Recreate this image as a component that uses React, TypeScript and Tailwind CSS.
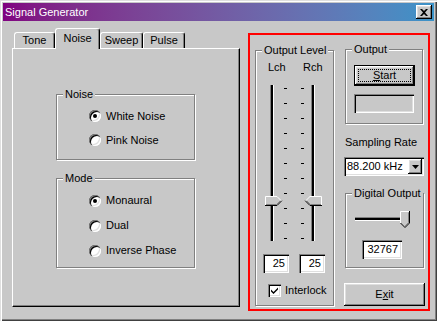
import React from "react";

const raised =
  "shadow-[inset_-1px_-1px_0_#000,inset_1px_1px_0_#fff,inset_-2px_-2px_0_#808080,inset_2px_2px_0_#dfdfdf]";
const sunken =
  "shadow-[inset_1px_1px_0_#808080,inset_2px_2px_0_#000,inset_-1px_-1px_0_#fff,inset_-2px_-2px_0_#dfdfdf]";
const etched =
  "relative border border-[#808080] shadow-[1px_1px_0_#fff,inset_1px_1px_0_#fff]";

function Legend({ children }: { children: React.ReactNode }) {
  return (
    <span className="absolute -top-[7px] left-[6px] px-[2px] bg-[#c8c8c8] leading-[13px] whitespace-nowrap">
      {children}
    </span>
  );
}

function Radio({ label, checked, rowClass }: { label: string; checked?: boolean; rowClass: string }) {
  return (
    <div className={`flex items-center gap-[5px] ${rowClass}`}>
      <span className="flex items-center justify-center w-[12px] h-[12px] rounded-full bg-white shadow-[inset_1px_1px_0_#808080,inset_2px_2px_0_#000,inset_-1px_-1px_0_#fff,inset_-2px_-2px_0_#dfdfdf]">
        {checked && <span className="w-[4px] h-[4px] rounded-full bg-black" />}
      </span>
      <span>{label}</span>
    </div>
  );
}

function VThumb({ dir }: { dir: "right" | "left" }) {
  return (
    <svg width="18" height="10" viewBox="0 0 18 10" className={dir === "left" ? "-scale-x-100" : ""}>
      <polygon points="0,0 12,0 17,5 12,10 0,10" fill="#c8c8c8" />
      <polyline points="0.5,9.5 0.5,0.5 12,0.5 16.3,4.8" fill="none" stroke="#fff" />
      <polyline points="0,9.5 12,9.5 16.8,4.7" fill="none" stroke="#000" />
      <polyline points="1,8.5 11.6,8.5 15.3,4.8" fill="none" stroke="#808080" />
    </svg>
  );
}

function VSlider({ trackLeft, thumb }: { trackLeft: string; thumb: "right" | "left" }) {
  return (
    <div className="relative w-[18px] h-[156px]">
      <div
        className={`absolute top-0 bottom-0 ${trackLeft} w-[4px] bg-black border-l border-r border-l-[#808080] border-r-white`}
      />
      <div className="absolute left-0 top-[111px] flex">
        <VThumb dir={thumb} />
      </div>
    </div>
  );
}

function Ticks() {
  return (
    <div className="flex flex-col gap-[14px] pt-[3px]">
      {Array.from({ length: 11 }).map((_, i) => (
        <div key={i} className="w-[3px] h-[1px] bg-black" />
      ))}
    </div>
  );
}

function Edit({ value, w }: { value: string; w: string }) {
  return (
    <div className={`${w} h-[19px] bg-white ${sunken} flex items-center justify-end pr-[4px]`}>
      {value}
    </div>
  );
}

export default function App() {
  return (
    <div className="w-[437px] h-[321px] bg-[#c8c8c8] p-[3px] flex flex-col font-['Liberation_Sans',Arial,sans-serif] text-[11px] leading-[13px] text-black shadow-[inset_1px_1px_0_#dfdfdf,inset_2px_2px_0_#fff,inset_-1px_-1px_0_#404040,inset_-2px_-2px_0_#808080]">
      {/* title bar */}
      <div className="h-[18px] flex items-center justify-between pl-[2px] pr-[2px] bg-linear-to-r from-[#800080] to-[#3a93c8] text-white">
        <span>Signal Generator</span>
        <div className={`w-[16px] h-[14px] bg-[#c8c8c8] ${raised} flex items-center justify-center`}>
          <svg width="8" height="7" viewBox="0 0 8 7">
            <path d="M0 0h2l2 2 2-2h2L5 3.5 8 7H6L4 5 2 7H0l3-3.5z" fill="#000" />
          </svg>
        </div>
      </div>

      <div className="flex">
        {/* tabs + page */}
        <div className="ml-[9px] mt-[7px]">
          <div className="flex items-end h-[20px] pl-[2px]">
            <div className="w-[41px] h-[16px] flex items-center justify-center border-t border-l border-white border-r border-r-black rounded-t-[3px] shadow-[inset_-1px_0_0_#808080]">
              Tone
            </div>
            <div className="relative z-10 w-[45px] h-[21px] -mb-[1px] bg-[#c8c8c8] flex justify-center pt-[3px] border-t border-l border-white border-r border-r-black rounded-t-[3px] shadow-[inset_-1px_0_0_#808080]">
              Noise
            </div>
            <div className="w-[43px] h-[16px] flex items-center justify-center border-t border-l border-white border-r border-r-black rounded-t-[3px] shadow-[inset_-1px_0_0_#808080]">
              Sweep
            </div>
            <div className="w-[42px] h-[16px] flex items-center justify-center border-t border-l border-white border-r border-r-black rounded-t-[3px] shadow-[inset_-1px_0_0_#808080]">
              Pulse
            </div>
          </div>
          <div className="w-[228px] h-[259px] border border-white border-r-black border-b-black shadow-[inset_-1px_-1px_0_#808080] pl-[43px] pt-[45px]">
            <div className={`${etched} w-[139px] h-[66px] pl-[32px] pt-[9px]`}>
              <Legend>Noise</Legend>
              <Radio label="White Noise" checked rowClass="h-[24px]" />
              <Radio label="Pink Noise" rowClass="h-[24px]" />
            </div>
            <div className={`${etched} w-[139px] h-[90px] mt-[18px] pl-[32px] pt-[9px]`}>
              <Legend>Mode</Legend>
              <Radio label="Monaural" checked rowClass="h-[25px]" />
              <Radio label="Dual" rowClass="h-[25px]" />
              <Radio label="Inverse Phase" rowClass="h-[25px]" />
            </div>
          </div>
        </div>

        {/* highlighted output area */}
        <div className="ml-[8px] mt-[12px] w-[182px] h-[278px] border-2 border-[#ff0000] flex pl-[5px] pt-[14px]">
          <div className={`${etched} mt-[1px] w-[79px] h-[256px] pt-[10px]`}>
            <Legend>Output Level</Legend>
            <div className="flex pl-[12px]">
              <span className="w-[35px]">Lch</span>
              <span>Rch</span>
            </div>
            <div className="flex mt-[11px] pl-[9px]">
              <div className="w-[19px]">
                <VSlider trackLeft="left-[5px]" thumb="right" />
              </div>
              <Ticks />
              <div className="w-[14px]" />
              <Ticks />
              <VSlider trackLeft="left-[7px]" thumb="left" />
            </div>
            <div className="flex gap-[10px] mt-[13px] pl-[7px]">
              <Edit value="25" w="w-[26px]" />
              <Edit value="25" w="w-[26px]" />
            </div>
            <div className="flex items-center gap-[4px] mt-[11px] pl-[12px]">
              <span className={`w-[13px] h-[13px] bg-white ${sunken} flex items-center justify-center`}>
                <svg width="7" height="7" viewBox="0 0 7 7">
                  <path d="M0 2.5l2.5 2.5L7 0.5v2L2.5 7 0 4.5z" fill="#000" />
                </svg>
              </span>
              <span>Interlock</span>
            </div>
          </div>

          <div className="ml-[10px] w-[81px] flex flex-col">
            <div className={`${etched} ml-[1px] w-[78px] h-[75px] pl-[8px] pt-[15px]`}>
              <Legend>Output</Legend>
              <div className="w-[61px] h-[21px] border border-black bg-[#c8c8c8] flex">
                <div className={`flex-1 ${raised} p-[3px]`}>
                  <div className="w-full h-full border border-dotted border-black flex items-center justify-center">
                    <span>
                      <span className="underline">S</span>tart
                    </span>
                  </div>
                </div>
              </div>
              <div className="w-[60px] h-[19px] mt-[8px] shadow-[inset_1px_1px_0_#808080,inset_2px_2px_0_#000,inset_-1px_-1px_0_#fff,inset_-2px_-2px_0_#dfdfdf]" />
            </div>

            <div className="mt-[12px] pl-[1px]">Sampling Rate</div>
            <div className={`mt-[8px] w-[80px] h-[19px] bg-white ${sunken} flex items-center pl-[3px] pr-[2px]`}>
              <span className="flex-1">88.200 kHz</span>
              <span className={`w-[14px] h-[15px] bg-[#c8c8c8] ${raised} flex items-center justify-center`}>
                <svg width="7" height="4" viewBox="0 0 7 4">
                  <path d="M0 0h7L3.5 4z" fill="#000" />
                </svg>
              </span>
            </div>

            <div className={`${etched} mt-[17px] ml-[1px] w-[79px] h-[75px] pl-[9px] pt-[17px]`}>
              <Legend>Digital Output</Legend>
              <div className="relative w-[56px] h-[18px]">
                <div className="absolute left-0 top-[6px] w-[52px] h-[4px] bg-black border-t border-b border-t-[#808080] border-b-white" />
                <svg width="10" height="17" viewBox="0 0 10 17" className="absolute left-[45px] top-0">
                  <polygon points="0,0 10,0 10,12 5,17 0,12" fill="#c8c8c8" />
                  <polyline points="0.5,12 0.5,0.5 9.5,0.5" fill="none" stroke="#fff" />
                  <polyline points="9.5,0 9.5,12 5,16.5 0.5,12" fill="none" stroke="#000" />
                  <polyline points="8.5,1.5 8.5,11.6 5,15.2" fill="none" stroke="#808080" />
                </svg>
              </div>
              <div className="mt-[11px] ml-[7px]">
                <Edit value="32767" w="w-[40px]" />
              </div>
            </div>

            <div className={`mt-[15px] w-[81px] h-[23px] ${raised} flex items-center justify-center`}>
              <span>
                E<span className="underline">x</span>it
              </span>
            </div>
          </div>
        </div>
      </div>
    </div>
  );
}
